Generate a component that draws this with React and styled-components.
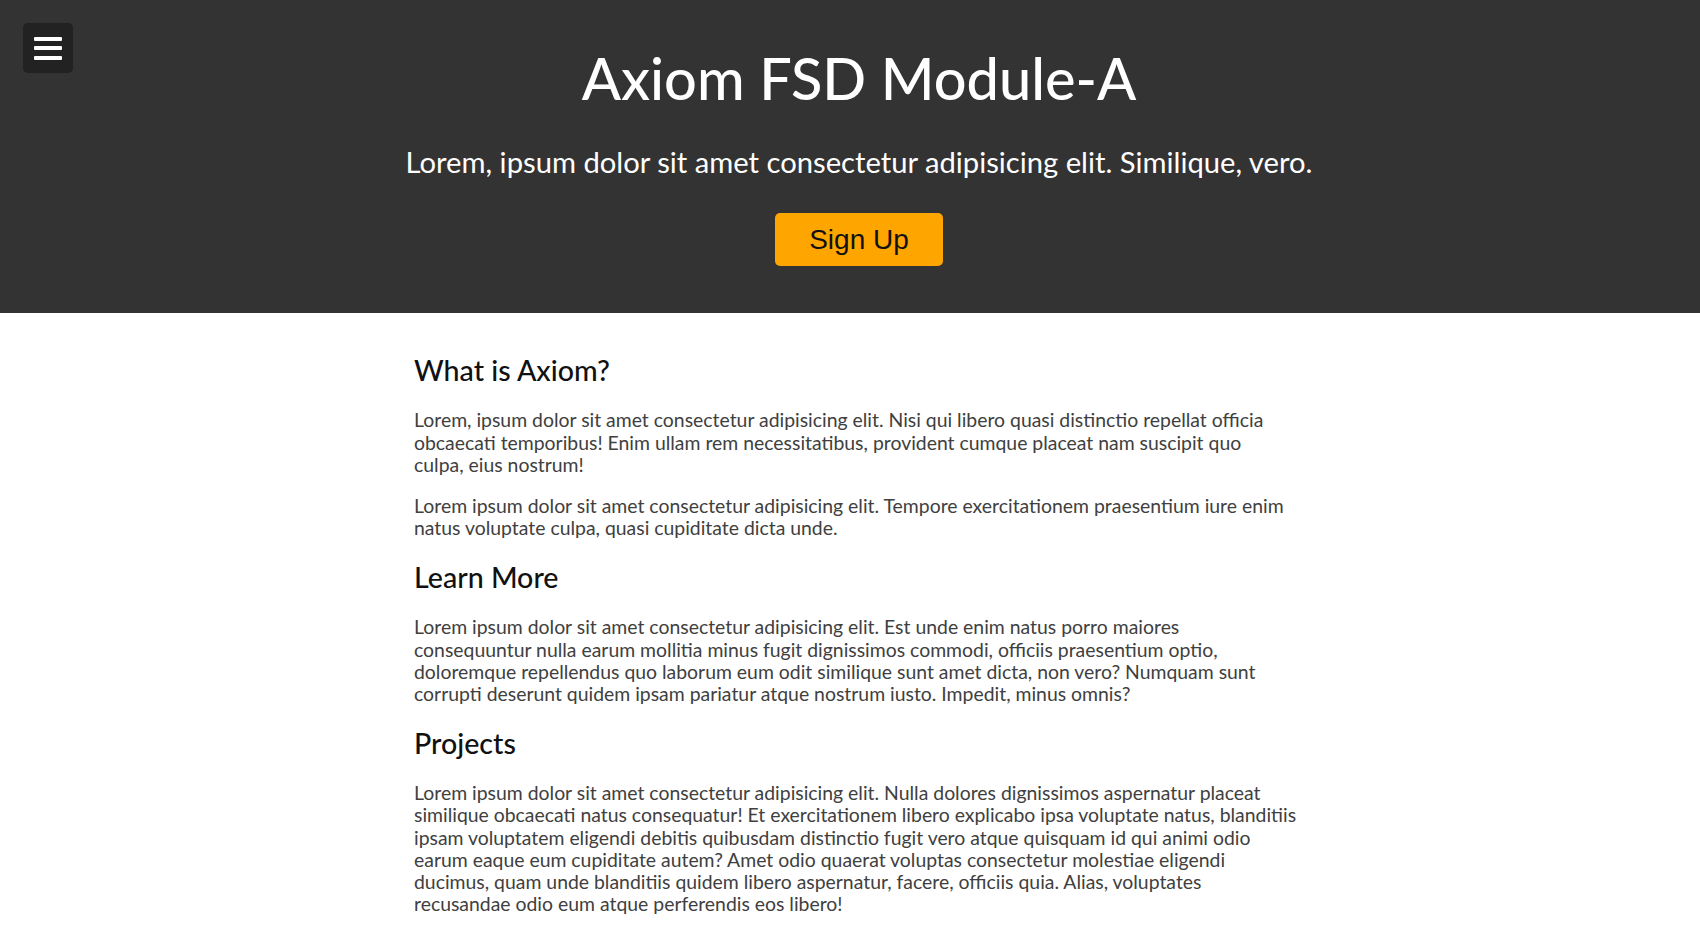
import React from "react";
import styled, { createGlobalStyle } from "styled-components";

const GlobalStyle = createGlobalStyle`
  * { box-sizing: border-box; }
  html, body { margin: 0; padding: 0; background: #ffffff; }
  body { font-family: "Lato", "Open Sans", sans-serif; color: #333; }
`;

const Header = styled.header`
  position: relative;
  background: #333333;
  padding: 43px 20px 47px 38px;
  display: flex;
  flex-direction: column;
  align-items: center;
  text-align: center;
`;

const MenuButton = styled.button`
  position: absolute;
  top: 23px;
  left: 23px;
  width: 50px;
  height: 50px;
  border: none;
  border-radius: 5px;
  background: #222222;
  display: flex;
  flex-direction: column;
  align-items: center;
  justify-content: center;
  gap: 5.5px;
  padding: 0;
  cursor: pointer;
`;

const Bar = styled.span`
  display: block;
  width: 28px;
  height: 4px;
  border-radius: 1px;
  background: #ffffff;
`;

const Title = styled.h1`
  margin: 0;
  font-size: 57.7px;
  font-weight: 500;
  line-height: 1.2;
  color: #ffffff;
`;

const Tagline = styled.p`
  margin: 32px 0 34px;
  font-size: 29.2px;
  font-weight: 400;
  line-height: 1.2;
  color: #ffffff;
`;

const SignUp = styled.button`
  font-family: "Liberation Sans", Arial, sans-serif;
  font-size: 28px;
  line-height: 1.15;
  color: #111;
  background: #ffa500;
  border: none;
  border-radius: 5px;
  padding: 10.5px 34.5px;
  cursor: pointer;
`;

const Main = styled.main`
  width: 890px;
  margin-left: calc(50% - 436px);
  padding: 19px 0 40px;
`;

const Heading = styled.h2`
  margin: 22px 0;
  font-size: 28.6px;
  font-weight: 500;
  line-height: 33px;
  color: #111;
`;

const Para = styled.p`
  margin: 19px 0;
  font-size: 19.4px;
  line-height: 22.2px;
  color: #404040;
`;

const sections = [
  {
    title: "What is Axiom?",
    paras: [
      [
        "Lorem, ipsum dolor sit amet consectetur adipisicing elit. Nisi qui libero quasi distinctio repellat officia",
        "obcaecati temporibus! Enim ullam rem necessitatibus, provident cumque placeat nam suscipit quo",
        "culpa, eius nostrum!",
      ],
      [
        "Lorem ipsum dolor sit amet consectetur adipisicing elit. Tempore exercitationem praesentium iure enim",
        "natus voluptate culpa, quasi cupiditate dicta unde.",
      ],
    ],
  },
  {
    title: "Learn More",
    paras: [
      [
        "Lorem ipsum dolor sit amet consectetur adipisicing elit. Est unde enim natus porro maiores",
        "consequuntur nulla earum mollitia minus fugit dignissimos commodi, officiis praesentium optio,",
        "doloremque repellendus quo laborum eum odit similique sunt amet dicta, non vero? Numquam sunt",
        "corrupti deserunt quidem ipsam pariatur atque nostrum iusto. Impedit, minus omnis?",
      ],
    ],
  },
  {
    title: "Projects",
    paras: [
      [
        "Lorem ipsum dolor sit amet consectetur adipisicing elit. Nulla dolores dignissimos aspernatur placeat",
        "similique obcaecati natus consequatur! Et exercitationem libero explicabo ipsa voluptate natus, blanditiis",
        "ipsam voluptatem eligendi debitis quibusdam distinctio fugit vero atque quisquam id qui animi odio",
        "earum eaque eum cupiditate autem? Amet odio quaerat voluptas consectetur molestiae eligendi",
        "ducimus, quam unde blanditiis quidem libero aspernatur, facere, officiis quia. Alias, voluptates",
        "recusandae odio eum atque perferendis eos libero!",
      ],
    ],
  },
];

export default function App() {
  return (
    <>
      <GlobalStyle />
      <Header>
        <MenuButton aria-label="Menu">
          <Bar />
          <Bar />
          <Bar />
        </MenuButton>
        <Title>Axiom FSD Module-A</Title>
        <Tagline>Lorem, ipsum dolor sit amet consectetur adipisicing elit. Similique, vero.</Tagline>
        <SignUp>Sign Up</SignUp>
      </Header>
      <Main>
        {sections.map((s) => (
          <section key={s.title}>
            <Heading>{s.title}</Heading>
            {s.paras.map((lines, i) => (
              <Para key={i}>
                {lines.map((line, j) => (
                  <React.Fragment key={j}>
                    {j > 0 && <br />}
                    {line}
                  </React.Fragment>
                ))}
              </Para>
            ))}
          </section>
        ))}
      </Main>
    </>
  );
}
